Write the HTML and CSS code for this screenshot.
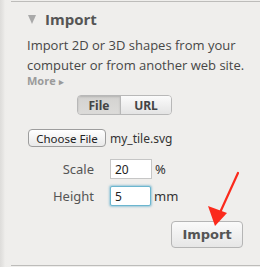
FILE: index.html
```html
<!DOCTYPE html>
<html>
<head>
<meta charset="utf-8">
<link rel="stylesheet" href="styles.css">
</head>
<body>
<div class="panel">
  <div class="head">
    <span class="tri"></span>
    <h2 class="title">Import</h2>
  </div>
  <p class="desc">Import 2D or 3D shapes from your computer or from another web site.</p>
  <div class="more">More <span class="caret">&#9656;</span></div>
  <div class="seg">
    <span class="seg-btn on">File</span>
    <span class="seg-btn">URL</span>
  </div>
  <div class="file-row">
    <span class="btn choose">Choose File</span>
    <span class="fname">my_tile.svg</span>
  </div>
  <div class="field scale">
    <span class="lbl">Scale</span>
    <span class="inp">20</span>
    <span class="unit">%</span>
  </div>
  <div class="field height">
    <span class="lbl">Height</span>
    <span class="inp focus">5</span>
    <span class="unit">mm</span>
  </div>
  <div class="actions">
    <span class="btn import">Import</span>
  </div>
</div>
<svg class="arrow" width="260" height="267" viewBox="0 0 260 267">
  <line x1="238" y1="173" x2="218" y2="217" stroke="#fb2a1c" stroke-width="2.2" stroke-linecap="round"/>
  <polygon points="215,226 208,206 227,213" fill="#fb2a1c"/>
</svg>
</body>
</html>
```
FILE: styles.css
```css
html, body {
  margin: 0;
  padding: 0;
}
body {
  width: 260px;
  height: 267px;
  overflow: hidden;
  background: linear-gradient(to right, #dddcda 0, #e6e5e3 3px, #eeedeb 5px, #efeeec 7px);
  font-family: "Open Sans", "Liberation Sans", sans-serif;
  color: #444;
  position: relative;
}
.panel {
  margin: 1px 0 0 11px;
  height: 263px;
  border-top: 1px solid #bdbcba;
  border-bottom: 1px solid #bdbcba;
  padding-left: 16px;
  display: flex;
  flex-direction: column;
}
.head {
  display: flex;
  align-items: center;
  gap: 9px;
  margin-top: 7px;
  height: 20px;
}
.tri {
  width: 0;
  height: 0;
  border-left: 4px solid transparent;
  border-right: 4px solid transparent;
  border-top: 9px solid #a9a9a9;
  margin-left: 1px;
}
.title {
  margin: 0;
  font-size: 15px;
  font-weight: 700;
  color: #555;
  line-height: 20px;
}
.desc {
  margin: 6px 0 0;
  font-size: 13px;
  line-height: 20px;
  color: #474747;
  width: 222px;
}
.more {
  font-size: 11px;
  font-weight: 700;
  color: #9a9a9a;
  line-height: 16px;
  margin-top: -2px;
}
.caret {
  font-size: 9px;
}
.seg {
  display: flex;
  margin: 5px 0 0 50px;
  height: 20px;
  width: 95px;
  border: 1px solid #b8b8b8;
  border-radius: 4px;
  box-sizing: border-box;
  overflow: hidden;
  font-family: "Noto Sans", sans-serif;
  font-size: 12px;
  font-weight: 700;
  color: #444;
}
.seg-btn {
  display: flex;
  align-items: center;
  justify-content: center;
  flex: 0 0 auto;
}
.seg-btn.on {
  width: 42px;
  background: linear-gradient(#d3d2d0, #dcdbd9);
  border-right: 1px solid #b8b8b8;
  box-shadow: inset 0 1px 2px rgba(0,0,0,.15);
}
.seg-btn:not(.on) {
  flex: 1;
  background: linear-gradient(#fbfbfb, #e4e4e4);
}
.file-row {
  display: flex;
  align-items: center;
  height: 18px;
  margin-top: 14px;
  gap: 4px;
}
.btn {
  display: inline-flex;
  align-items: center;
  justify-content: center;
  box-sizing: border-box;
  border: 1px solid #9d9d9d;
  border-radius: 4px;
  background: linear-gradient(#ffffff, #e9e9e9);
  color: #222;
}
.choose {
  width: 78px;
  height: 18px;
  font-family: "Noto Sans", sans-serif;
  font-size: 11.5px;
  margin-left: 1px;
}
.fname {
  font-family: "Noto Sans", sans-serif;
  font-size: 12px;
  color: #333;
}
.field {
  display: flex;
  align-items: center;
  height: 20px;
}
.field.scale {
  margin-top: 12px;
}
.field.height {
  margin-top: 7px;
}
.lbl {
  width: 67px;
  text-align: right;
  font-family: "Noto Sans", sans-serif;
  font-size: 13px;
  color: #555;
}
.inp {
  margin-left: 16px;
  width: 42px;
  height: 20px;
  box-sizing: border-box;
  border: 1px solid #c6c6c6;
  background: #fff;
  font-family: "Noto Sans", sans-serif;
  font-size: 12px;
  color: #222;
  padding-left: 4px;
  display: flex;
  align-items: center;
}
.inp.focus {
  border: 1px solid #6cb6cf;
  box-shadow: 0 0 2px 1px rgba(90, 170, 200, .55);
  border-radius: 2px;
  width: 41px;
}
.unit {
  margin-left: 3px;
  font-family: "Noto Sans", sans-serif;
  font-size: 13px;
  color: #333;
}
.actions {
  display: flex;
  justify-content: flex-end;
  margin-top: 15px;
  width: 216px;
}
.import {
  width: 72px;
  height: 27px;
  font-family: "DejaVu Sans", sans-serif;
  font-size: 13px;
  font-weight: 700;
  color: #555;
  border-color: #b5b5b5;
  background: linear-gradient(#fafafa, #e6e6e6);
}
.arrow {
  position: absolute;
  left: 0;
  top: 0;
  pointer-events: none;
}
```
